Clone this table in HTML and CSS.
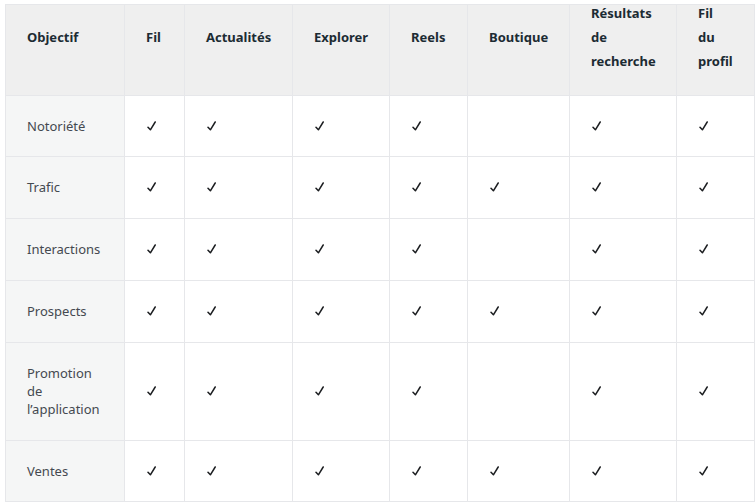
FILE: index.html
```html
<!DOCTYPE html>
<html lang="fr">
<head>
<meta charset="utf-8">
<title>Objectifs et placements</title>
<link rel="stylesheet" href="styles.css">
</head>
<body>
<svg width="0" height="0" class="defs" aria-hidden="true">
  <symbol id="chk" viewBox="0 0 9 10">
    <path d="M1 6.2 L3.4 8.8 L8.2 1" fill="none" stroke="#1c1e21" stroke-width="1.5" stroke-linecap="round" stroke-linejoin="round"/>
  </symbol>
</svg>
<div class="table">
  <div class="cell head first">Objectif</div>
  <div class="cell head">Fil</div>
  <div class="cell head">Actualités</div>
  <div class="cell head">Explorer</div>
  <div class="cell head">Reels</div>
  <div class="cell head">Boutique</div>
  <div class="cell head"><span class="stack">Résultats de recherche</span></div>
  <div class="cell head"><span class="stack">Fil du profil</span></div>

  <div class="cell first">Notoriété</div>
  <div class="cell"><svg class="chk"><use href="#chk"/></svg></div>
  <div class="cell"><svg class="chk"><use href="#chk"/></svg></div>
  <div class="cell"><svg class="chk"><use href="#chk"/></svg></div>
  <div class="cell"><svg class="chk"><use href="#chk"/></svg></div>
  <div class="cell"></div>
  <div class="cell"><svg class="chk"><use href="#chk"/></svg></div>
  <div class="cell"><svg class="chk"><use href="#chk"/></svg></div>

  <div class="cell first">Trafic</div>
  <div class="cell"><svg class="chk"><use href="#chk"/></svg></div>
  <div class="cell"><svg class="chk"><use href="#chk"/></svg></div>
  <div class="cell"><svg class="chk"><use href="#chk"/></svg></div>
  <div class="cell"><svg class="chk"><use href="#chk"/></svg></div>
  <div class="cell"><svg class="chk"><use href="#chk"/></svg></div>
  <div class="cell"><svg class="chk"><use href="#chk"/></svg></div>
  <div class="cell"><svg class="chk"><use href="#chk"/></svg></div>

  <div class="cell first">Interactions</div>
  <div class="cell"><svg class="chk"><use href="#chk"/></svg></div>
  <div class="cell"><svg class="chk"><use href="#chk"/></svg></div>
  <div class="cell"><svg class="chk"><use href="#chk"/></svg></div>
  <div class="cell"><svg class="chk"><use href="#chk"/></svg></div>
  <div class="cell"></div>
  <div class="cell"><svg class="chk"><use href="#chk"/></svg></div>
  <div class="cell"><svg class="chk"><use href="#chk"/></svg></div>

  <div class="cell first">Prospects</div>
  <div class="cell"><svg class="chk"><use href="#chk"/></svg></div>
  <div class="cell"><svg class="chk"><use href="#chk"/></svg></div>
  <div class="cell"><svg class="chk"><use href="#chk"/></svg></div>
  <div class="cell"><svg class="chk"><use href="#chk"/></svg></div>
  <div class="cell"><svg class="chk"><use href="#chk"/></svg></div>
  <div class="cell"><svg class="chk"><use href="#chk"/></svg></div>
  <div class="cell"><svg class="chk"><use href="#chk"/></svg></div>

  <div class="cell first"><span class="stack">Promotion de l’application</span></div>
  <div class="cell"><svg class="chk"><use href="#chk"/></svg></div>
  <div class="cell"><svg class="chk"><use href="#chk"/></svg></div>
  <div class="cell"><svg class="chk"><use href="#chk"/></svg></div>
  <div class="cell"><svg class="chk"><use href="#chk"/></svg></div>
  <div class="cell"></div>
  <div class="cell"><svg class="chk"><use href="#chk"/></svg></div>
  <div class="cell"><svg class="chk"><use href="#chk"/></svg></div>

  <div class="cell first">Ventes</div>
  <div class="cell"><svg class="chk"><use href="#chk"/></svg></div>
  <div class="cell"><svg class="chk"><use href="#chk"/></svg></div>
  <div class="cell"><svg class="chk"><use href="#chk"/></svg></div>
  <div class="cell"><svg class="chk"><use href="#chk"/></svg></div>
  <div class="cell"><svg class="chk"><use href="#chk"/></svg></div>
  <div class="cell"><svg class="chk"><use href="#chk"/></svg></div>
  <div class="cell"><svg class="chk"><use href="#chk"/></svg></div>
</div>
</body>
</html>
```
FILE: styles.css
```css
html, body {
  margin: 0;
  padding: 0;
  background: #ffffff;
}
body {
  font-family: "Noto Sans", "Liberation Sans", sans-serif;
  font-size: 13px;
  color: #444950;
}
.defs {
  position: absolute;
  width: 0;
  height: 0;
  overflow: hidden;
}
.table {
  display: grid;
  grid-template-columns: 118px 59px 107px 96px 77px 101px 106px 77px;
  grid-template-rows: 90px 60px 61px 61px 61px 97px 60px;
  gap: 1px;
  width: max-content;
  margin: 4px 0 0 5px;
  background: #e6e7ea;
  border: 1px solid #e6e7ea;
}
.cell {
  background: #ffffff;
  display: flex;
  align-items: center;
  padding-left: 21px;
  padding-bottom: 1px;
  line-height: 18px;
  min-width: 0;
}
.cell.first {
  background: #f5f6f6;
}
.cell.head {
  background: #efefef;
  font-weight: 700;
  color: #1c2b33;
  line-height: 24px;
  padding-bottom: 27px;
}
.stack {
  width: min-content;
  display: block;
}
.chk {
  width: 9px;
  height: 10px;
  margin-left: 1px;
  display: block;
}
```
